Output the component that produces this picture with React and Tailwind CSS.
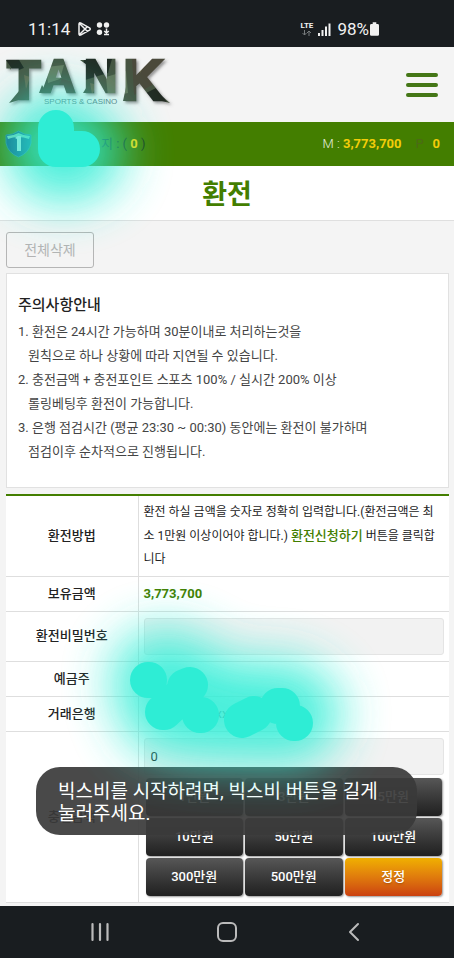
import { useState } from "react";

const notices = [
  ["1. 환전은 24시간 가능하며 30분이내로 처리하는것을", "원칙으로 하나 상황에 따라 지연될 수 있습니다."],
  ["2. 충전금액 + 충전포인트 스포츠 100% / 실시간 200% 이상", "롤링베팅후 환전이 가능합니다."],
  ["3. 은행 점검시간 (평균 23:30 ~ 00:30) 동안에는 환전이 불가하며", "점검이후 순차적으로 진행됩니다."],
];

const amounts = [
  ["1만원", 10000],
  ["3만원", 30000],
  ["5만원", 50000],
  ["10만원", 100000],
  ["50만원", 500000],
  ["100만원", 1000000],
  ["300만원", 3000000],
  ["500만원", 5000000],
];

function StatusBar() {
  return (
    <div className="flex h-[47px] items-center bg-[#191d20] pt-[11px] pl-7 text-[17px] leading-5 text-[#f1f1f1]">
      <span className="w-[49px]">11:14</span>
      <svg className="h-4 w-9" viewBox="0 0 36 16" fill="none" stroke="#f1f1f1" strokeWidth="1.5" strokeLinejoin="round">
        <path d="M2 3.2Q2 1.2 4 2.2L12.500 6.800Q14 8 12.500 9.200L4 13.800Q2 14.800 2 12.800ZM2.500 2.500L10.500 10.500M2.500 13.500L10.500 5.500" />
        <g fill="#f1f1f1" stroke="none">
          <circle cx="22.500" cy="4" r="2.700" />
          <circle cx="29.500" cy="4" r="2.700" />
          <circle cx="22.500" cy="11.200" r="2.700" />
        </g>
        <path d="M29.500 7.500V12M27.200 10L29.500 12L31.800 10M27 13.500H32" />
      </svg>
      <div className="ml-auto flex items-center pr-[75px]">
        <div className="flex w-[18px] flex-col">
          <span className="text-[8px] leading-[8px] font-bold">LTE</span>
          <svg className="h-[6px] w-3" viewBox="0 0 12 6" fill="none" stroke="#777b7d">
            <path d="M4.500 0V5M2.500 3L4.500 5L6.500 3M9 6V1M7 3L9 1L11 3" />
          </svg>
        </div>
        <svg className="h-[13px] w-[19px]" viewBox="0 0 19 13" fill="#f1f1f1">
          <path d="M0 10h2v3h-2zM3.500 7h2v6h-2zM7 3.500h2v9.500h-2zM10.500 0.500h2v12.500h-2z" />
        </svg>
        <span className="text-[17px]">98%</span>
        <svg className="ml-px h-[14px] w-[9px]" viewBox="0 0 10 15" fill="#f1f1f1">
          <path d="M3 0h4v2h1.500q1.500 0 1.500 1.500v10q0 1.500-1.500 1.500h-7q-1.500 0-1.500-1.500v-10q0-1.500 1.500-1.500H3z" />
        </svg>
      </div>
    </div>
  );
}

function Logo() {
  return (
    <svg className="h-[64px] w-[172px] overflow-visible" viewBox="0 0 172 64" role="img" aria-label="TANK Sports & Casino">
      <defs>
        <pattern id="camo" width="172" height="64" patternUnits="userSpaceOnUse">
          <rect width="172" height="64" fill="#46533f" />
          <path d="M2 4l14 1 6 10-10 4zM82 4l28 2-4 14-26 8zM144 40l12-6 14 24-14 4z" fill="#232c24" />
          <path d="M44 14l18-2-4 14-12 4zM104 24l20-6 2 22-20 4z" fill="#66745a" />
          <path d="M60 26l14 4-4 16-18-4zM130 4l34 2-14 26-18 10z" fill="#4b483a" />
          <path d="M136 8l8 2-6 10zM22 22l6 2-4 12zM88 30l8 2-6 9z" fill="#66654c" />
        </pattern>
        <filter id="logoShadow" x="-10%" y="-10%" width="120%" height="130%">
          <feDropShadow dx="2" dy="2" stdDeviation="1.500" floodColor="#555" floodOpacity="0.600" />
        </filter>
      </defs>
      <g fill="url(#camo)" stroke="url(#camo)" strokeWidth="2.500" filter="url(#logoShadow)" fontFamily="Liberation Sans, sans-serif" fontWeight="700">
        <text>
          <tspan x="5" y="46" fontSize="55">T</tspan>
          <tspan x="40" y="39" fontSize="46">A</tspan>
          <tspan x="82" y="39" fontSize="46">N</tspan>
          <tspan x="121" y="47" fontSize="57">K</tspan>
        </text>
        <path stroke="none" d="M4 7l5 10v-9zM39 7l-4 8v-8zM17 38v9l-10 3zM40 32l-3 8h8zM124 34l-3 14h8zM154 38l14 12-12-3zM78 7l7 5v-5zM86 32l-5 8h5z" />
      </g>
      <text x="42" y="51" fontSize="8" fill="#66757c" fontFamily="Liberation Sans, sans-serif">SPORTS &amp; CASINO</text>
    </svg>
  );
}

function Shield() {
  return (
    <svg className="h-7 w-7" viewBox="0 0 28 28">
      <path d="M1 5Q8 5 13.500 1Q19 5 26 5V13Q24 23 13.500 27Q3 23 1 13Z" fill="#10507c" stroke="#2b7a85" />
      <path d="M2 6Q8 6 13.500 3Q19 6 25 6L24 9Q13 5 3 9Z" fill="#7fcdb0" />
      <path d="M10 8l3-2h3v15h-4v-12z" fill="#c4e6e0" />
    </svg>
  );
}

function Row({ label, htmlFor, rowClass, children }) {
  return (
    <tr className={"border-b border-[#dedede] " + rowClass}>
      <th scope="row" className="border-r border-[#dedede] p-0 text-center font-medium">
        {htmlFor ? <label htmlFor={htmlFor}>{label}</label> : label}
      </th>
      <td className="px-[5px] py-0">{children}</td>
    </tr>
  );
}

function Highlighter() {
  return (
    <svg className="pointer-events-none absolute top-0 left-0 h-[906px] w-[454px]" viewBox="0 0 454 906" aria-hidden="true">
      <defs>
        <filter id="glow" filterUnits="userSpaceOnUse" x="-100" y="0" width="654" height="906">
          <feGaussianBlur stdDeviation="25" />
        </filter>
        <clipPath id="page">
          <rect y="44" width="454" height="862" />
        </clipPath>
      </defs>
      <g clipPath="url(#page)">
        <g filter="url(#glow)" fill="#2eedd5" stroke="#2eedd5" opacity="0.880" strokeLinecap="round" strokeLinejoin="round">
          <path d="M54 142L58 154L74 152" strokeWidth="98" />
          <path d="M162 680L180 685L170 706L200 710L245 712L280 710L290 714" strokeWidth="100" />
        </g>
        <g fill="none" stroke="#2eedd5" strokeWidth="36" strokeLinecap="round" strokeLinejoin="round">
          <path d="M56 128L56 149M62 149L82 149" />
          <path d="M148 680h1M185 687L190 685M163 712h1M164 712L185 692M200 715h1M242 720L254 714M278 706L282 706M294 723h1" />
        </g>
      </g>
    </svg>
  );
}

export default function App() {
  const [amount, setAmount] = useState(0);
  return (
    <div className="relative flex min-h-screen flex-col overflow-hidden bg-[#f4f4f4] font-[Roboto,'Noto_Sans_CJK_KR',sans-serif] text-[13px] text-[#222]">
      <StatusBar />
      <header className="flex h-[75px] items-center justify-between pr-4 pl-[2px]">
        <a href="#home"><Logo /></a>
        <button type="button" aria-label="메뉴" className="flex w-8 flex-col gap-[6px]">
          <span className="h-1 rounded-sm bg-[#447616]" />
          <span className="h-1 rounded-sm bg-[#447616]" />
          <span className="h-1 rounded-sm bg-[#447616]" />
        </button>
      </header>
      <div className="flex h-11 items-center bg-[#437e00] pr-[14px] pl-[5px]">
        <Shield />
        <span className="ml-[68px] text-[13px] text-[#1c3f16]">
          지 : ( <b className="text-[#f5d90a]">0</b> )
        </span>
        <span className="ml-auto text-[#e8f0df]">
          <span className="font-light">M :</span> <b className="text-[#f3cd09]">3,773,700</b>
        </span>
        <span className="ml-[14px] w-[17px] text-[#4c6a17]">P</span>
        <b className="text-[#f3cd09]">0</b>
      </div>
      <h1 className="h-[55px] border-b border-[#dfdfdf] bg-white text-center text-[27px] leading-[58px] font-bold text-[#437e00]">환전</h1>

      <main className="pt-[11px] pr-[5px] pb-[3px] pl-[6px]">
        <button type="button" className="block h-9 w-[88px] rounded-[3px] border border-[#b5b5b5] text-[14px] text-[#b3b3b3]">
          전체삭제
        </button>
        <section className="mt-[5px] h-[215px] border border-[#e1e1e1] bg-white px-[11px] pt-[18px] text-[#444]">
          <h2 className="mb-[2px] text-[15px] leading-[26px] font-medium text-[#222]">주의사항안내</h2>
          {notices.map(([first, second]) => (
            <p key={first} className="leading-6">
              {first}
              <span className="block pl-[10px]">{second}</span>
            </p>
          ))}
        </section>

        <table className="mt-[6px] w-full table-fixed border-collapse border-t-2 border-t-[#437e00] bg-white">
          <colgroup>
            <col className="w-[132px]" />
            <col />
          </colgroup>
          <tbody>
            <Row label="환전방법" rowClass="h-[81px]">
              <p className="text-[12px] leading-[23px] break-all">
                환전 하실 금액을 숫자로 정확히 입력합니다.(환전금액은 최소 1만원 이상이어야 합니다.){" "}
                <b className="text-[13px] font-medium text-[#437e00]">환전신청하기</b> 버튼을 클릭합니다
              </p>
            </Row>
            <Row label="보유금액" rowClass="h-[35px]">
              <b className="text-[#437e00]">3,773,700</b>
            </Row>
            <Row label="환전비밀번호" htmlFor="pin" rowClass="h-[50px]">
              <input id="pin" type="password" className="block h-[37px] w-full rounded-[3px] border border-[#e4e4e4] bg-[#f2f2f2] px-[6px]" />
            </Row>
            <Row label="예금주" rowClass="h-[35px]" />
            <Row label="거래은행" rowClass="h-[35px]">
              <span className="pl-[72px] text-[#555]">xx</span>
            </Row>
            <Row label="충전금액" htmlFor="amount" rowClass="h-[171px]">
              <input
                id="amount"
                value={amount}
                onChange={(e) => setAmount(Number(e.target.value) || 0)}
                className="block h-[37px] w-full rounded-[3px] border border-[#e4e4e4] bg-[#f2f2f2] px-[6px]"
              />
              <div className="mt-[3px] grid grid-cols-3 gap-[2px] px-[2px]">
                {amounts.map(([label, value]) => (
                  <button
                    key={label}
                    type="button"
                    onClick={() => setAmount(amount + value)}
                    className="h-[38px] rounded-[4px] bg-linear-to-b from-[#575757] to-[#202020] font-medium text-white shadow-[1px_1px_2px_#999]"
                  >
                    {label}
                  </button>
                ))}
                <button
                  type="button"
                  onClick={() => setAmount(0)}
                  className="h-[38px] rounded-[4px] bg-linear-to-b from-[#f0b000] to-[#cb4010] font-medium text-white shadow-[1px_1px_2px_#999] text-shadow-sm"
                >
                  정정
                </button>
              </div>
            </Row>
          </tbody>
        </table>
      </main>

      <nav className="mt-auto flex h-[52px] items-center justify-around bg-[#191d20] px-[37px]">
        <button type="button" aria-label="최근 앱">
          <svg className="h-5 w-5" viewBox="0 0 20 20" stroke="#bbb" strokeWidth="2.200" strokeLinecap="round">
            <path d="M2.500 2v16M10 2v16M17.500 2v16" />
          </svg>
        </button>
        <button type="button" aria-label="홈">
          <svg className="h-5 w-5" viewBox="0 0 20 20" fill="none" stroke="#bbb" strokeWidth="2">
            <rect x="1" y="1" width="18" height="18" rx="5" />
          </svg>
        </button>
        <button type="button" aria-label="뒤로">
          <svg className="h-5 w-5" viewBox="0 0 20 20" fill="none" stroke="#bbb" strokeWidth="2" strokeLinecap="round" strokeLinejoin="round">
            <path d="M14 2L6 10L14 18" />
          </svg>
        </button>
      </nav>

      <div role="status" className="absolute right-[37px] bottom-[123px] left-9 rounded-[24px] bg-[#3a3a3a]/92 px-[22px] pt-[14px] pb-[10px] text-[19px] leading-[22px] break-keep text-white">
        빅스비를 시작하려면, 빅스비 버튼을 길게 눌러주세요.
      </div>
      <Highlighter />
    </div>
  );
}
